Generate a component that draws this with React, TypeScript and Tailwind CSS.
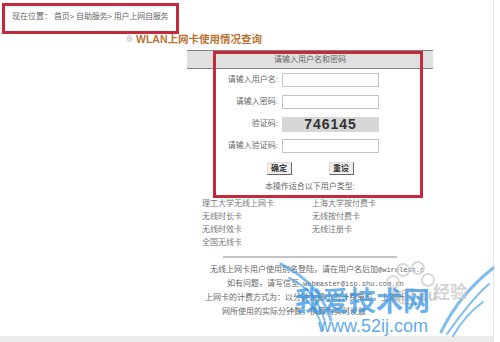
import React from 'react';

const cardTypes = [
  ['理工大学无线上网卡', '上海大学按付费卡'],
  ['无线时长卡', '无线按付费卡'],
  ['无线时效卡', '无线注册卡'],
  ['全国无线卡', ''],
];

const fields = [
  { label: '请输入用户名:', kind: 'input' },
  { label: '请输入密码:', kind: 'input' },
  { label: '验证码:', kind: 'code' },
  { label: '请输入验证码:', kind: 'input' },
];

function Watermark() {
  return (
    <div className="absolute left-[275px] top-[258px] w-[222px] h-[80px] pointer-events-none">
      {/* wings + paw */}
      <svg className="absolute left-0 top-0" width="222" height="80" viewBox="0 0 222 80">
        <g fill="none" stroke="#4aa3e6" strokeLinecap="round" opacity="0.7">
          <path d="M6 6 C 30 18, 48 36, 56 62" strokeWidth="3" />
          <path d="M14 20 C 32 28, 44 42, 50 64" strokeWidth="2" />
          <path d="M24 36 C 36 44, 44 56, 48 72" strokeWidth="2" />
          <path d="M218 10 C 196 28, 180 46, 166 74" strokeWidth="3" />
          <path d="M214 26 C 198 40, 186 56, 172 76" strokeWidth="2" />
          <path d="M208 44 C 194 54, 186 64, 178 78" strokeWidth="2" />
        </g>
        <g fill="none" stroke="#cfcfcf" strokeWidth="2" opacity="0.8">
          <circle cx="128" cy="12" r="6" />
          <circle cx="143" cy="10" r="6" />
          <circle cx="118" cy="24" r="6" />
          <circle cx="153" cy="22" r="6" />
          <path d="M122 40 C 124 28, 146 28, 148 40 C 150 48, 120 48, 122 40 Z" />
        </g>
      </svg>
      <div className="absolute left-[116px] top-[26px] text-[15px] font-bold text-[#c4c4c4] opacity-80 font-['Noto_Sans_CJK_SC',sans-serif]">
        Bai du
      </div>
      <div className="absolute left-[158px] top-[20px] text-[17px] font-bold text-[#cacaca] opacity-80 font-['Noto_Sans_CJK_SC',sans-serif]">
        经验
      </div>
      <div className="absolute left-[20px] top-[28px] text-[27px] leading-[28px] font-bold text-[#3a96e2] opacity-75 tracking-[0px] font-['Noto_Sans_CJK_SC',sans-serif]">
        我爱技术网
      </div>
      <div className="absolute left-[43px] top-[58px] text-[18px] leading-[20px] text-[#3a96e2] opacity-80 font-['Liberation_Sans',sans-serif]">
        www.52ij.com
      </div>
    </div>
  );
}

export default function App() {
  return (
    <div className="relative w-[500px] h-[342px] overflow-hidden bg-white text-[#666] font-['Liberation_Sans','Noto_Sans_CJK_SC',sans-serif]">
      <div className="flex h-full">
        <div className="w-[494px] border-r border-[#e6e6e6] flex flex-col">
          {/* Breadcrumb */}
          <div className="h-[28px] pt-[12px] pl-[12px] text-[8px] leading-[10px] text-[#666]">
            现在位置：<span className="ml-[2px] tracking-[-0.2px]">首页&gt; 自助服务&gt; 用户上网自服务</span>
          </div>

          {/* Title */}
          <div className="h-[22px] pl-[126px] flex items-center gap-[3px] text-[#bb7535]">
            <span className="text-[7px] text-[#b0a090]">⊕</span>
            <span className="text-[10.5px] font-bold leading-[12px]">WLAN上网卡使用情况查询</span>
          </div>

          {/* Form table */}
          <div className="ml-[187px] w-[246px] flex flex-col">
            <div className="h-[19px] bg-[#e0e0e0] border-t border-b border-[#808080] flex items-center justify-center text-[8px] text-[#666]">
              请输入用户名和密码
            </div>

            <div className="flex flex-col gap-[8px] pt-[4px]">
              {fields.map(f => (
                <div key={f.label} className="flex items-center h-[14px]">
                  <div className="w-[93px] pr-[2px] text-right text-[8px] text-[#666]">{f.label}</div>
                  {f.kind === 'code' ? (
                    <div className="ml-[2px] w-[97px] h-[15px] bg-[#d6d6d6] flex items-center justify-center text-[14px] font-bold tracking-[1px] text-[#333] font-['Liberation_Sans',sans-serif]">
                      746145
                    </div>
                  ) : (
                    <div className="ml-[2px] w-[97px] h-[14px] border border-[#c4c4c4] bg-white" />
                  )}
                </div>
              ))}
            </div>

            <div className="flex justify-center gap-[37px] pt-[9px]">
              {['确定', '重设'].map(b => (
                <button
                  key={b}
                  className="w-[25px] h-[13px] border border-t-[#ddd] border-l-[#ddd] border-b-[#666] border-r-[#666] bg-[#efefef] text-[8px] leading-[10px] font-bold text-[#333]"
                >
                  {b}
                </button>
              ))}
            </div>

            <div className="pt-[7px] text-center text-[8px] leading-[10px] text-[#666]">本操作适合以下用户类型:</div>

            {/* Card types */}
            <div className="pt-[5px] flex flex-col">
              {cardTypes.map(([a, b]) => (
                <div key={a} className="h-[13px] flex items-center text-[8px] text-[#777]">
                  <span className="ml-[15px] w-[110px]">{a}</span>
                  <span>{b}</span>
                </div>
              ))}
            </div>

            <div className="mt-[7px] ml-[36px] w-[174px] h-[2px] bg-[#c4c4c4]" />
          </div>

          {/* Notes */}
          <div className="pt-[5px] flex flex-col text-[8px] text-[#666]">
            <div className="h-[14px] pl-[210px] whitespace-nowrap flex items-center">
              无线上网卡用户使用别名登陆，请在用户名后加<span className="font-['Liberation_Mono',monospace] text-[7px]">@wireless.c</span>
            </div>
            <div className="h-[14px] pl-[227px] whitespace-nowrap flex items-center">
              如有问题，请写信至 <span className="ml-[4px] font-['Liberation_Mono',monospace] text-[7px]">webmaster@isp.shu.com.cn</span>
            </div>
            <div className="h-[14px] pl-[205px] whitespace-nowrap flex items-center">
              上网卡的计费方式为：以分钟为最小的计费单位，上网计
            </div>
            <div className="h-[14px] pl-[222px] whitespace-nowrap flex items-center">
              网所使用的实际分钟数，换算为实时发放
            </div>
          </div>

          <div className="mt-auto h-[6px] bg-[#ececec]" />
        </div>
        <div className="flex-1 bg-white" />
      </div>

      <Watermark />

      {/* annotation boxes */}
      <div className="absolute left-[2px] top-[3px] w-[177px] h-[31px] border-[3px] border-[#c42a3c]" />
      <div className="absolute left-[213px] top-[51px] w-[210px] h-[147px] border-[3px] border-[#c42a3c]" />
    </div>
  );
}
